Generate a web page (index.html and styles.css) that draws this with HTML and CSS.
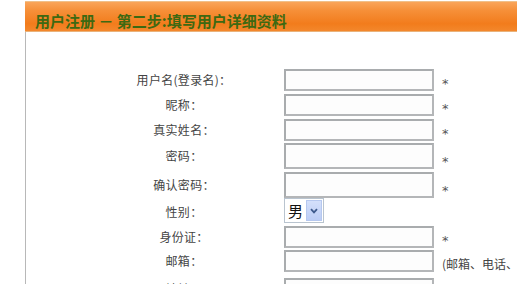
FILE: index.html
```html
<!DOCTYPE html>
<html>
<head>
<meta charset="utf-8">
<link rel="stylesheet" href="styles.css">
</head>
<body>
<div class="page">
  <div class="header"><span class="title">用户注册 － 第二步:填写用户详细资料</span></div>
  <div class="content">
    <div class="form">
      <div class="row r1"><div class="label">用户名(登录名)：</div><div class="field"><span class="input"></span></div><div class="note">*</div></div>
      <div class="row r2"><div class="label">昵称：</div><div class="field"><span class="input"></span></div><div class="note">*</div></div>
      <div class="row r3"><div class="label">真实姓名：</div><div class="field"><span class="input"></span></div><div class="note">*</div></div>
      <div class="row r4"><div class="label">密码：</div><div class="field"><span class="input tall"></span></div><div class="note">*</div></div>
      <div class="row r5"><div class="label">确认密码：</div><div class="field"><span class="input tall"></span></div><div class="note">*</div></div>
      <div class="row r6"><div class="label">性别：</div><div class="field"><span class="select"><span class="val">男</span><span class="btn"><svg width="8" height="6" viewBox="0 0 8 6"><path d="M1 1.2 L4 4.4 L7 1.2" fill="none" stroke="#3e5a8c" stroke-width="1.8"/></svg></span></span></div><div class="note"></div></div>
      <div class="row r7"><div class="label">身份证：</div><div class="field"><span class="input"></span></div><div class="note">*</div></div>
      <div class="row r8"><div class="label">邮箱：</div><div class="field"><span class="input"></span></div><div class="note text">(邮箱、电话、</div></div>
      <div class="row r9"><div class="label">地址：</div><div class="field"><span class="input"></span></div><div class="note"></div></div>
    </div>
  </div>
</div>
</body>
</html>
```
FILE: styles.css
```css
html, body {
  margin: 0;
  padding: 0;
  background: #ffffff;
  overflow: hidden;
}
body {
  font-family: "Noto Sans CJK SC", "DejaVu Sans", sans-serif;
  font-size: 12px;
  color: #444;
}
.page {
  width: 517px;
  height: 284px;
  padding-top: 1px;
  box-sizing: border-box;
  overflow: hidden;
}
.header {
  margin-left: 25px;
  height: 31px;
  box-sizing: border-box;
  border-top: 1px solid #f0c08a;
  border-bottom: 1px solid #e9b27a;
  background: linear-gradient(#f9a55a 0%, #f68f38 30%, #f27c1c 75%, #f3872c 100%);
  display: flex;
  align-items: flex-end;
  padding-left: 10px;
  padding-bottom: 1px;
}
.title {
  font-size: 15px;
  font-weight: bold;
  color: #3d6912;
  line-height: 19px;
  white-space: nowrap;
}
.content {
  margin-left: 25px;
  border-left: 1px solid #b8b8b8;
  height: 252px;
  padding-top: 37px;
  box-sizing: border-box;
  overflow: hidden;
}
.form {
  display: grid;
  grid-template-columns: 192px 150px 1fr;
  column-gap: 4px;
  padding-left: 62px;
}
.row {
  display: contents;
}
.label, .field, .note {
  display: flex;
}
.label {
  justify-content: center;
  align-items: center;
  color: #444;
  line-height: 14px;
  white-space: nowrap;
  letter-spacing: 0.3px;
}
.field { align-items: flex-start; }
.note {
  align-items: flex-end;
  padding-left: 4px;
  line-height: 15px;
  color: #555;
  white-space: nowrap;
  font-family: "DejaVu Sans", sans-serif;
  font-size: 13px;
}
.note.text {
  padding-bottom: 3px;
  color: #444;
  font-size: 12px;
  line-height: 14px;
  font-family: "Noto Sans CJK SC", sans-serif;
}
.input {
  display: block;
  width: 150px;
  height: 22px;
  box-sizing: border-box;
  border: 2px solid #a9acae;
  border-right-color: #b4b6b8;
  border-bottom-color: #b4b6b8;
  background: #fdfdfd;
}
.input.tall { height: 26px; }
.r1 > * { height: 22px; margin-bottom: 3px; }
.r2 > * { height: 22px; margin-bottom: 3px; }
.r3 > * { height: 22px; margin-bottom: 2px; }
.r4 > * { height: 26px; margin-bottom: 3px; }
.r5 > * { height: 26px; margin-bottom: 0; }
.r6 > * { height: 25px; margin-bottom: 3px; }
.r7 > * { height: 22px; margin-bottom: 2px; }
.r8 > * { height: 21px; margin-bottom: 4px; }
.r9 > * { height: 22px; }
.r6 .label { padding-top: 2px; box-sizing: border-box; }
.select {
  display: flex;
  align-items: center;
  width: 40px;
  height: 25px;
  box-sizing: border-box;
  border: 1px solid #b9c4cf;
  background: #fff;
  padding: 1px 1px 1px 3px;
}
.val {
  font-size: 15px;
  color: #111;
  line-height: 18px;
  width: 19px;
}
.btn {
  width: 16px;
  height: 21px;
  margin-left: auto;
  box-sizing: border-box;
  background: linear-gradient(#d4e0fb, #bccdf5);
  border: 1px solid #b6c8ef;
  display: flex;
  align-items: center;
  justify-content: center;
}
```
